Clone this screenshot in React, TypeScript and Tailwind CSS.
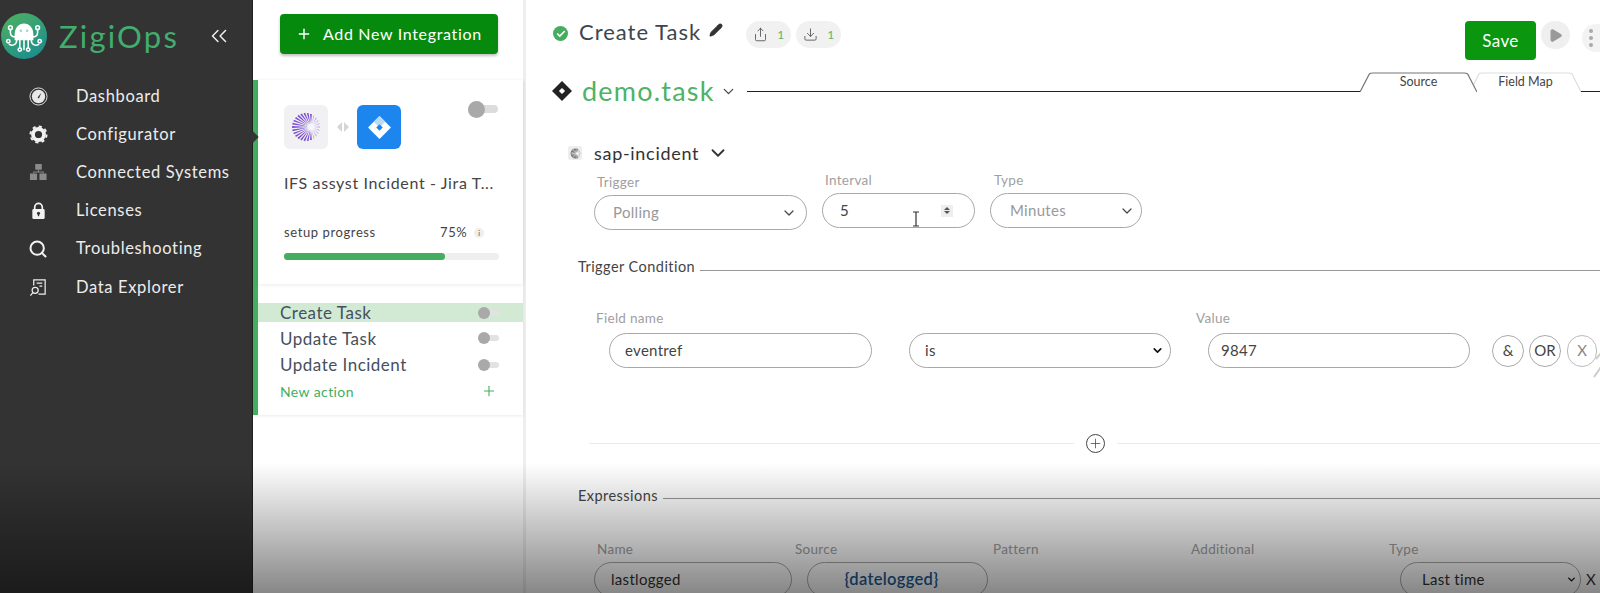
import { ChevronDown, ChevronsLeft, Check, Pencil, Play, Plus, Search, Share, Download } from "lucide-react";

const font = "font-['Lato','Noto_Sans',sans-serif]";

function Octopus() {
  return (
    <svg viewBox="0 0 44 44" className="w-[46px] h-[46px] shrink-0">
      <defs>
        <linearGradient id="logo" x1="0" y1="0" x2="0.6" y2="1">
          <stop offset="0" stopColor="#4fb35e" />
          <stop offset="1" stopColor="#1f8f8c" />
        </linearGradient>
      </defs>
      <circle cx="22" cy="22" r="22" fill="url(#logo)" />
      <path d="M13 21c0-7 4-11 9-11s9 4 9 11v5h-18z" fill="#fff" />
      <circle cx="19" cy="17" r="1.2" fill="#9fd6b5" />
      <circle cx="25" cy="17" r="1.2" fill="#9fd6b5" />
      <g fill="none" stroke="#fff" strokeWidth="1.5" strokeLinecap="round">
        <path d="M14 23c-3 0-5-1-5-4v-3M15 26c0 4-4 6-7 4M18 26v7M22 26v9M26 26v7M29 26c0 4 4 6 7 4M30 23c3 0 5-1 5-4v-3" />
        <circle cx="9" cy="14" r="1.8" />
        <circle cx="35" cy="14" r="1.8" />
        <circle cx="18" cy="35" r="1.6" />
        <circle cx="26" cy="35" r="1.6" />
        <circle cx="7" cy="27" r="1.6" />
        <circle cx="37" cy="27" r="1.6" />
      </g>
    </svg>
  );
}

function Gauge() {
  return (
    <svg viewBox="0 0 20 20" className="w-[19px] h-[19px]">
      <circle cx="10" cy="10" r="9" fill="none" stroke="#e5e5e5" strokeWidth="1" />
      <circle cx="10" cy="10" r="7" fill="#e8e8e8" />
      <path d="M9 11l4-5-2.5 6z" fill="#333" />
    </svg>
  );
}

function Gear() {
  return (
    <svg viewBox="0 0 20 20" className="w-[19px] h-[19px]">
      <circle cx="10" cy="10" r="5.800" fill="none" stroke="#f2f2f2" strokeWidth="4" />
      <circle cx="10" cy="10" r="8.500" fill="none" stroke="#f2f2f2" strokeWidth="2" strokeDasharray="3.300 3.370" />
    </svg>
  );
}

function Network() {
  return (
    <svg viewBox="0 0 20 20" className="w-[19px] h-[19px]" fill="#8b8b8b">
      <rect x="6.500" y="1" width="7" height="6" rx="0.500" />
      <rect x="1" y="11" width="7.500" height="7" rx="0.500" />
      <rect x="11" y="11" width="7.500" height="7" rx="0.500" />
      <path d="M9.500 7h1v2h5v2h-1v-1h-9v1h-1v-2h5z" />
    </svg>
  );
}

function Padlock() {
  return (
    <svg viewBox="0 0 20 20" className="w-[19px] h-[19px]">
      <path d="M6 9V6.500a4 4 0 0 1 8 0V9" fill="none" stroke="#f2f2f2" strokeWidth="1.800" />
      <rect x="3.500" y="8.500" width="13" height="10.500" rx="1.500" fill="#f2f2f2" />
      <circle cx="10" cy="13" r="1.600" fill="#333" />
      <rect x="9.300" y="13" width="1.400" height="3" fill="#333" />
    </svg>
  );
}

function Explorer() {
  return (
    <svg viewBox="0 0 20 20" className="w-[19px] h-[19px]" fill="none" stroke="#eee" strokeWidth="1.300">
      <path d="M5 8V2h12v15H10" />
      <path d="M8 5.500h6M11 8.500h3" />
      <circle cx="6.500" cy="13" r="3.200" />
      <path d="M4 15.500L1.500 18.500" />
    </svg>
  );
}

function Swirl({ size, color = "#7a4fd0" }: { size: number; color?: string }) {
  const rays = Array.from({ length: 26 }, (_, i) => (i * Math.PI * 2) / 26);
  return (
    <svg viewBox="0 0 40 40" width={size} height={size}>
      {rays.map((a) => {
        const ox = 20 + 15.500 * Math.cos(a);
        const oy = 20 + 15.500 * Math.sin(a);
        const d = Math.atan2(oy - 20, ox - 25.500);
        const ix = 25.500 + 3.500 * Math.cos(d);
        const iy = 20 + 3.500 * Math.sin(d);
        const w = Math.cos(a) > 0.5 ? 0.45 : 1;
        const nx = -Math.sin(d) * w;
        const ny = Math.cos(d) * w;
        return (
          <polygon
            key={a}
            points={`${ix},${iy} ${ox + nx},${oy + ny} ${ox - nx},${oy - ny}`}
            fill={color}
            opacity={Math.cos(a) > 0.5 ? 0.55 : 1}
          />
        );
      })}
      <circle cx="25.500" cy="20" r="3.200" fill="#f3f6fd" />
    </svg>
  );
}

function Toggle({ big }: { big?: boolean }) {
  return big ? (
    <div className="relative w-[30px] h-[18px] flex items-center">
      <div className="w-full h-[8px] rounded-full bg-[#dcdcdc]" />
      <div className="absolute left-0 w-[17px] h-[17px] rounded-full bg-[#a9a9a9]" />
    </div>
  ) : (
    <div className="relative w-[21px] h-[12px] flex items-center">
      <div className="w-full h-[6px] rounded-full bg-[#e2e2e2]" />
      <div className="absolute left-0 w-[12px] h-[12px] rounded-full bg-[#a9a9a9]" />
    </div>
  );
}

function Label({ children, className }: { children: string; className?: string }) {
  return <div className={`text-[13.5px] leading-4 tracking-[0.3px] text-[#a0a0a0] ${className ?? ""}`}>{children}</div>;
}

function Pill({ className, children }: { className: string; children?: React.ReactNode }) {
  return (
    <div className={`h-[35px] rounded-full border border-[#a8a8a8] flex items-center text-[15px] tracking-[0.3px] ${className}`}>
      {children}
    </div>
  );
}

function Section({ title }: { title: string }) {
  return (
    <div className="flex items-center gap-[5px]">
      <span className="text-[14.5px] leading-5 tracking-[0.45px] text-[#444]">{title}</span>
      <div className="flex-1 h-px mt-[6px] bg-[#999]" />
    </div>
  );
}

function Tab({ label, active, className }: { label: string; active?: boolean; className: string }) {
  return (
    <div className={`relative h-[20px] text-[12.5px] text-center leading-[19px] text-[#444] ${className}`}>
      <svg viewBox="0 0 100 20" preserveAspectRatio="none" className="absolute inset-0 w-full h-full">
        <path
          d="M0 20L8 2Q9 1 11 1H89Q91 1 92 2L100 20"
          fill="#fff"
          stroke={active ? "#777" : "#ddd"}
          strokeWidth="1.200"
          vectorEffect="non-scaling-stroke"
        />
      </svg>
      <span className="relative">{label}</span>
    </div>
  );
}

const nav = [
  { label: "Dashboard", icon: <Gauge /> },
  { label: "Configurator", icon: <Gear /> },
  { label: "Connected Systems", icon: <Network /> },
  { label: "Licenses", icon: <Padlock /> },
  { label: "Troubleshooting", icon: <Search className="w-[20px] h-[20px] text-[#f2f2f2]" strokeWidth={2.4} /> },
  { label: "Data Explorer", icon: <Explorer /> },
];

const actions = [
  { name: "Update Task" },
  { name: "Update Incident" },
];

export default function App() {
  return (
    <div className={`relative flex w-[1600px] h-[593px] overflow-hidden bg-white ${font}`}>
      <aside className="w-[253px] shrink-0 bg-[#333333] border-r-[1px] border-[#222]">
        <div className="flex items-center pl-[1px] pt-[13px]">
          <Octopus />
          <span className="ml-[12px] text-[31px] leading-[46px] tracking-[2.2px] text-[#41ad6e]">ZigiOps</span>
          <ChevronsLeft className="ml-[27px] w-[26px] h-[26px] text-[#eee]" strokeWidth={1.4} />
        </div>
        <nav className="mt-[18px] flex flex-col">
          {nav.map((n) => (
            <div key={n.label} className="flex items-center h-[38.200px]">
              <div className="w-[76px] flex justify-end pr-[28px] shrink-0">{n.icon}</div>
              <span className="text-[16.500px] tracking-[0.650px] text-[#ececec]">{n.label}</span>
            </div>
          ))}
        </nav>
      </aside>

      <section className="w-[273px] shrink-0 bg-white border-r-[3px] border-[#eeeeee]">
        <div className="pl-[27px] pt-[14px]">
          <button className="w-[218px] h-[40px] rounded-[4px] bg-[#068a0d] shadow-[0_2px_3px_rgba(0,0,0,0.25)] flex items-center text-white pl-[16px]">
            <Plus className="w-[16px] h-[16px]" strokeWidth={2.200} />
            <span className="ml-[11px] text-[16px] tracking-[0.670px]">Add New Integration</span>
          </button>
        </div>
        <div className="mt-[26px] h-[335px] border-l-[5px] border-[#44ad5f] flex flex-col shadow-[0_1px_3px_rgba(0,0,0,0.08)]">
          <div className="h-[204px] pl-[26px] pr-[24px] pt-[25px] shadow-[0_1px_4px_rgba(0,0,0,0.08)]">
            <div className="flex items-start">
              <div className="w-[44px] h-[44px] rounded-[6px] bg-[#f1f1f3] flex items-center justify-center">
                <Swirl size={36} />
              </div>
              <div className="w-[29px] h-[44px] flex items-center justify-center gap-[2px]">
                <div className="w-0 h-0 border-y-[5px] border-y-transparent border-r-[5px] border-r-[#d5d5d5]" />
                <div className="w-0 h-0 border-y-[5px] border-y-transparent border-l-[5px] border-l-[#d5d5d5]" />
              </div>
              <div className="w-[44px] h-[44px] rounded-[6px] bg-[#1c86ee] flex items-center justify-center">
                <svg viewBox="0 0 24 24" className="w-[25px] h-[25px]">
                  <path d="M12 1l11 11-11 11L1 12z" fill="#fff" />
                  <path d="M12 1L6.500 6.500 12 12l5.500-5.500z" fill="#bcd9f7" />
                  <rect x="9.800" y="9.800" width="4.400" height="4.400" transform="rotate(45 12 12)" fill="#1c86ee" />
                </svg>
              </div>
              <div className="ml-auto -mt-[5px] mr-[1px]">
                <Toggle big />
              </div>
            </div>
            <div className="mt-[22px] text-[16px] tracking-[0.630px] text-[#444] whitespace-nowrap">IFS assyst Incident - Jira T...</div>
            <div className="mt-[28px] flex items-center text-[13px] tracking-[0.600px] text-[#444]">
              <span className="w-[156px]">setup progress</span>
              <span>75%</span>
              <span className="ml-[7px] w-[10px] h-[10px] rounded-full bg-[#eee] text-[7px] leading-[10px] text-center">i</span>
            </div>
            <div className="mt-[10px] h-[7px] rounded-full bg-[#eeeeee]">
              <div className="h-full w-[75%] rounded-full bg-[#44ad5f]" />
            </div>
          </div>
          <div className="mt-[19px]">
            <div className="h-[19px] mb-[3px] pl-[22px] pr-[24px] flex items-center justify-between bg-[#d2ead4]">
              <span className="text-[17px] tracking-[0.500px] text-[#46505c]">Create Task</span>
              <Toggle />
            </div>
            {actions.map((a) => (
              <div key={a.name} className="h-[26.500px] pl-[22px] pr-[24px] flex items-center justify-between">
                <span className="text-[17px] tracking-[0.500px] text-[#46505c]">{a.name}</span>
                <Toggle />
              </div>
            ))}
            <div className="h-[26px] pl-[22px] pr-[26px] flex items-center justify-between text-[#44ad5f]">
              <span className="text-[14px] tracking-[0.400px]">New action</span>
              <Plus className="w-[16px] h-[16px]" strokeWidth={1.600} />
            </div>
          </div>
        </div>
      </section>

      <main className="flex-1 min-w-0 pt-[18px]">
        <div className="flex items-start h-[44px]">
          <div className="ml-[27px] mt-[8px] w-[15px] h-[15px] rounded-full bg-[#44ad5f] flex items-center justify-center">
            <Check className="w-[10px] h-[10px] text-white" strokeWidth={4} />
          </div>
          <span className="ml-[11px] text-[22px] leading-[28px] tracking-[1px] text-[#3c4650]">Create Task</span>
          <Pencil className="ml-[8px] mt-[5px] w-[14px] h-[14px] text-[#333]" fill="#333" />
          <div className="ml-[23px] mt-[3px] w-[45px] h-[27px] rounded-full bg-[#f1f1f1] flex items-center justify-center gap-[9px]">
            <Share className="w-[15px] h-[15px] text-[#555]" strokeWidth={1.400} />
            <span className="text-[12px] text-[#5cb46e]">1</span>
          </div>
          <div className="ml-[5px] mt-[3px] w-[45px] h-[27px] rounded-full bg-[#f1f1f1] flex items-center justify-center gap-[9px]">
            <Download className="w-[15px] h-[15px] text-[#555]" strokeWidth={1.400} />
            <span className="text-[12px] text-[#5cb46e]">1</span>
          </div>
          <div className="ml-auto flex items-start">
            <button className="mt-[3px] w-[71px] h-[39px] rounded-[4px] bg-[#0a970f] text-white text-[17px] tracking-[0.400px]">Save</button>
            <div className="ml-[5px] mt-[3px] w-[29px] h-[28px] rounded-full bg-[#efefef] flex items-center justify-center">
              <Play className="w-[15px] h-[15px] text-[#999]" fill="#999" />
            </div>
            <div className="ml-[12px] mt-[6px] w-[18px] h-[28px] rounded-l-full bg-[#f3f3f3] flex flex-col items-center justify-center gap-[3px]">
              <span className="w-[4px] h-[4px] rounded-full bg-[#aaa]" />
              <span className="w-[4px] h-[4px] rounded-full bg-[#aaa]" />
              <span className="w-[4px] h-[4px] rounded-full bg-[#aaa]" />
            </div>
          </div>
        </div>

        <div className="flex items-center h-[58px] pl-[26px]">
          <svg viewBox="0 0 20 20" className="w-[20px] h-[20px]">
            <path d="M10 0l10 10-10 10L0 10z" fill="#222" />
            <rect x="7.800" y="7.800" width="4.400" height="4.400" transform="rotate(45 10 10)" fill="#fff" />
          </svg>
          <span className="ml-[10px] text-[27px] leading-[30px] tracking-[1.200px] text-[#4fb265]">demo.task</span>
          <ChevronDown className="ml-[5px] w-[17px] h-[17px] text-[#444]" strokeWidth={1.800} />
          <div className="ml-[10px] flex-1 flex items-end h-[21px] mb-[20px]">
            <div className="flex-1 h-px bg-[#222]" />
            <Tab label="Source" active className="w-[117px] z-10" />
            <Tab label="Field Map" className="w-[111px] -ml-[7px]" />
            <div className="w-[19px] h-px bg-[#222]" />
          </div>
        </div>

        <div className="pl-[42px] pt-[23px]">
          <div className="flex items-center h-[20px]">
            <span className="w-[14px] h-[14px] rounded-[2px] bg-[#eee] flex items-center justify-center">
              <Swirl size={13} color="#333" />
            </span>
            <span className="ml-[12px] text-[18px] tracking-[0.700px] text-[#333]">sap-incident</span>
            <ChevronDown className="ml-[8px] w-[22px] h-[22px] text-[#333]" strokeWidth={2} />
          </div>
        </div>

        <div className="flex items-start pl-[68px] mt-[9px]">
          <div className="w-[228px]">
            <Label className="pl-[3px] mt-[2px]">Trigger</Label>
            <Pill className="w-[213px] mt-[5px] pl-[18px] pr-[9px] justify-between text-[#999]">
              Polling
              <ChevronDown className="w-[16px] h-[16px] text-[#444]" strokeWidth={1.800} />
            </Pill>
          </div>
          <div className="w-[168px]">
            <Label className="pl-[3px]">Interval</Label>
            <Pill className="w-[153px] mt-[5px] pl-[17px] pr-[21px] justify-between text-[#444]">
              5
              <span className="w-[12px] h-[12px] bg-[#eee] flex flex-col items-center justify-center gap-[1px]">
                <span className="w-0 h-0 border-x-[3px] border-x-transparent border-b-[3px] border-b-[#555]" />
                <span className="w-0 h-0 border-x-[3px] border-x-transparent border-t-[3px] border-t-[#555]" />
              </span>
            </Pill>
          </div>
          <div>
            <Label className="pl-[4px]">Type</Label>
            <Pill className="w-[152px] mt-[5px] pl-[19px] pr-[6px] justify-between text-[#999]">
              Minutes
              <ChevronDown className="w-[16px] h-[16px] text-[#444]" strokeWidth={1.800} />
            </Pill>
          </div>
        </div>

        <div className="pl-[52px] mt-[27px]">
          <Section title="Trigger Condition" />
        </div>

        <div className="flex items-start pl-[70px] mt-[33px]">
          <div className="w-[313px]">
            <Label>Field name</Label>
            <Pill className="w-[263px] ml-[13px] mt-[6.500px] pl-[15px] text-[#444]">eventref</Pill>
          </div>
          <div className="w-[287px] pt-[22.500px]">
            <Pill className="w-[262px] pl-[15px] pr-[6px] justify-between text-[#444]">
              is
              <ChevronDown className="w-[13px] h-[13px] text-[#111]" strokeWidth={3} />
            </Pill>
          </div>
          <div className="w-[296px]">
            <Label>Value</Label>
            <Pill className="w-[262px] ml-[12px] mt-[6.500px] pl-[12px] text-[#444]">9847</Pill>
          </div>
          <div className="flex gap-[5px] pt-[24.500px]">
            {["&", "OR"].map((t) => (
              <div key={t} className="w-[32px] h-[32px] rounded-full border border-[#aaa] flex items-center justify-center text-[15px] text-[#444]">{t}</div>
            ))}
            <div className="w-[30px] h-[32px] ml-px rounded-full border border-[#bbb] flex items-center justify-center text-[15px] text-[#888]">X</div>
          </div>
        </div>

        <div className="ml-[63px] mt-[66px] flex items-center">
          <div className="w-[485px] h-px bg-[#eaeaea]" />
          <div className="ml-[12px] w-[19px] h-[19px] rounded-full border border-[#444] flex items-center justify-center">
            <Plus className="w-[15px] h-[15px] text-[#444]" strokeWidth={1.200} />
          </div>
          <div className="ml-[12px] flex-1 h-px bg-[#eaeaea]" />
        </div>

        <div className="pl-[52px] mt-[33px]">
          <Section title="Expressions" />
        </div>

        <div className="flex pl-[71px] mt-[35px]">
          <div className="w-[198px]"><Label>Name</Label></div>
          <div className="w-[198px]"><Label>Source</Label></div>
          <div className="w-[198px]"><Label>Pattern</Label></div>
          <div className="w-[198px]"><Label>Additional</Label></div>
          <div><Label>Type</Label></div>
        </div>
        <div className="flex items-start pl-[68px] mt-[5px]">
          <Pill className="w-[198px] pl-[16px] text-[#333] shrink-0">lastlogged</Pill>
          <Pill className="w-[181px] ml-[15px] pr-[12px] justify-center text-[#1d5a94] font-semibold !text-[16.500px] shrink-0">{"{datelogged}"}</Pill>
          <Pill className="w-[181px] ml-[412px] pl-[21px] pr-[3px] justify-between text-[#333] shrink-0">
            Last time
            <ChevronDown className="w-[11px] h-[11px] text-[#111]" strokeWidth={3} />
          </Pill>
          <span className="ml-[5px] mt-[6px] text-[15px] text-[#333]">X</span>
        </div>
      </main>

      <div className="absolute left-0 right-0 bottom-0 h-[130px] bg-gradient-to-b from-transparent to-[#00000078] pointer-events-none" />
      <div className="absolute left-[249px] top-[133px] w-[8px] h-[8px] rotate-45 bg-[#333]" />
      <svg viewBox="0 0 10 16" className="absolute left-[911px] top-[211px] w-[10px] h-[16px] pointer-events-none">
        <path d="M2 1h6M5 1v14M2 15h6" fill="none" stroke="#333" strokeWidth="1.200" />
      </svg>
      <svg viewBox="0 0 8 28" className="absolute left-[1593px] top-[351px] w-[8px] h-[28px] pointer-events-none">
        <path d="M8 2L3 8M8 16L1 26" fill="none" stroke="#ccc" strokeWidth="2" />
      </svg>
    </div>
  );
}
